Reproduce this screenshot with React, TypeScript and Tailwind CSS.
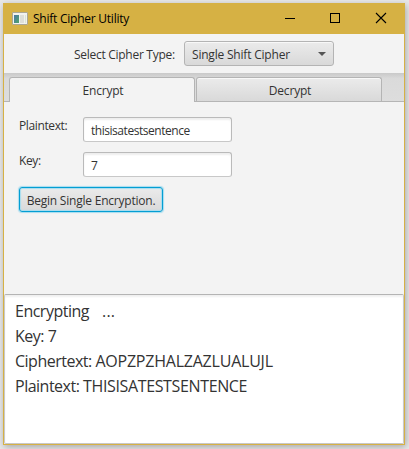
import React from "react";

function TitleBar() {
  return (
    <header className="flex h-[31px] shrink-0 items-center bg-[#d6b144] pl-[8px]">
      <svg width="16" height="13" viewBox="0 0 16 13" className="mr-[5px] shrink-0">
        <defs>
          <linearGradient id="pane" x1="0" y1="0" x2="1" y2="1">
            <stop offset="0" stopColor="#4b76a8" />
            <stop offset="1" stopColor="#4fa568" />
          </linearGradient>
        </defs>
        <rect x="0.5" y="0.5" width="15" height="12" rx="0.5" fill="#f2f2ee" stroke="#aaa795" />
        <rect x="2" y="3" width="5" height="8" fill="url(#pane)" />
        <rect x="8" y="3" width="4" height="8" fill="#dedfd8" />
        <rect x="13" y="3" width="1" height="8" fill="#dbe6d5" />
      </svg>
      <span className="text-[12px] leading-4 tracking-[-0.24px] text-black">Shift Cipher Utility</span>
      <div className="ml-auto flex h-full">
        <svg width="135" height="31" viewBox="0 0 135 31" fill="none" stroke="#000">
          <path d="M16 15.5h10M61.5 10.5h9v9h-9z" shapeRendering="crispEdges" />
          <path d="M107 10l10 10M117 10l-10 10" strokeWidth="1.1" />
        </svg>
      </div>
    </header>
  );
}

function Field({ label, value }: { label: string; value: string }) {
  return (
    <div className="flex h-[25px]">
      <label className="w-[64px] text-[12px] leading-[17px] tracking-[-0.38px]">{label}</label>
      <div className="flex h-[25px] w-[149px] items-center rounded-[3px] border border-[#bababa] border-b-[#c8c8c8] bg-white px-[7px] pt-[2px] text-[12px] tracking-[-0.46px] shadow-[inset_0_2px_2px_#eeeeee]">
        {value}
      </div>
    </div>
  );
}

export default function App() {
  return (
    <div className="h-[449px] w-[409px] bg-[#e9e9e9] pl-[3px] pt-[3px] font-['Open_Sans','Noto_Sans',sans-serif] text-[#333333]">
      <main className="flex h-[442px] w-[402px] flex-col border border-t-0 border-[#d6b144] bg-[#f3f3f3] shadow-[1px_2px_7px_#a6a6a6]">
        <TitleBar />
        <section className="flex h-[39px] shrink-0 items-center pl-[70px]">
          <span className="w-[110px] pt-[2px] text-[12px] leading-4 tracking-[-0.28px]">Select Cipher Type:</span>
          <div className="flex h-[25px] w-[150px] items-center justify-between rounded-[3px] border border-[#b4b4b4] bg-linear-to-b from-[#ebebeb] to-[#d9d9d9] pl-[7px] pr-[7px] text-[12px] tracking-[-0.2px] shadow-[inset_0_1px_0_#f8f8f8]">
            <span className="pt-[2px]">Single Shift Cipher</span>
            <svg width="8" height="4" viewBox="0 0 8 4"><path d="M0 0h8L4 4z" fill="#555" /></svg>
          </div>
        </section>
        <nav className="flex h-[29px] shrink-0 items-end border-b border-[#b5b5b5] bg-linear-to-b from-[#c9c9c9] via-[#dadada] via-20% to-[#dddddd] pl-[5px] text-[12px] tracking-[-0.2px]">
          <div className="-mb-px mr-px flex h-[25px] w-[186px] items-center justify-center rounded-t-[3px] border border-b-0 border-[#b4b4b4] bg-[#f3f3f3] pl-[2px] pt-[2px]">Encrypt</div>
          <div className="flex h-[24px] w-[186px] items-center justify-center rounded-t-[3px] border border-b-0 border-[#b4b4b4] bg-linear-to-b from-[#ebebeb] to-[#d9d9d9] pl-[2px] pt-[3px] shadow-[inset_0_1px_0_#f8f8f8]">Decrypt</div>
        </nav>
        <section className="flex h-[192px] shrink-0 flex-col items-start gap-[10px] pl-[15px] pt-[15px]">
          <Field label="Plaintext:" value="thisisatestsentence" />
          <Field label="Key:" value="7" />
          <button className="flex h-[25px] w-[144px] items-center justify-center whitespace-nowrap rounded-[3px] border border-[#039ed3] bg-linear-to-b from-[#ebebeb] to-[#d9d9d9] pt-[2px] text-[12px] tracking-[-0.22px] shadow-[0_0_1px_1px_#a6dcef,inset_0_0_1px_1px_#a6dcef]">
            Begin Single Encryption.
          </button>
        </section>
        <section className="min-h-0 flex-1 whitespace-pre rounded-[2px] border border-[#c8c8c8] border-t-[#b4b4b4] bg-white pl-[10px] pt-[4px] text-[16px] leading-[25px] shadow-[inset_0_2px_2px_#f0f0f0]">
          <p><span className="tracking-[-0.5px]">Encrypting</span><span className="tracking-[0.2px]">   ...</span></p>
          <p className="tracking-[-0.5px]">Key: 7</p>
          <p><span className="tracking-[-0.5px]">Ciphertext: </span><span className="tracking-[-0.22px]">AOPZPZHALZAZLUALUJL</span></p>
          <p><span className="tracking-[-0.5px]">Plaintext: </span><span className="tracking-[-0.36px]">THISISATESTSENTENCE</span></p>
        </section>
      </main>
    </div>
  );
}
